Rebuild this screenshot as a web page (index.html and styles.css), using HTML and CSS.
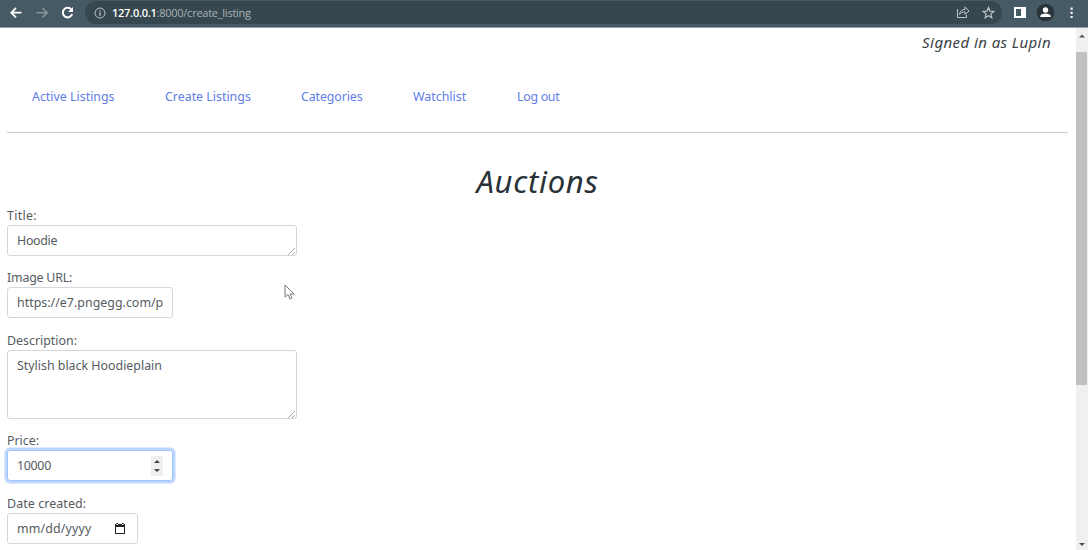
FILE: index.html
```
<!DOCTYPE html>
<html lang="en">
<head>
<meta charset="utf-8">
<title>Auctions</title>
<link rel="stylesheet" href="styles.css">
</head>
<body>
<header class="toolbar">
  <svg class="nav-icons" viewBox="0 0 84 27" fill="none" stroke-width="1.8">
    <path d="M21.500 12.700H11.500M16 8l-4.700 4.700 4.700 4.700" stroke="#fff"/>
    <path d="M36.500 12.700h10.500M42.500 8l4.700 4.700-4.700 4.700" stroke="#89959b" stroke-width="1.500"/>
    <path d="M71.300 9.500a4.800 4.800 0 1 0 .9 4.500" stroke="#fff" stroke-width="2"/>
    <path d="M73 7v5h-5z" fill="#fff"/>
  </svg>
  <div class="address">
    <svg class="info" viewBox="0 0 12 12" fill="none" stroke="#bac2c5" stroke-width="1"><circle cx="6" cy="6" r="5"/><path d="M6 5.300v3.500M6 3.200v1.300" stroke-width="1.300"/></svg>
    <span class="url"><b>127.0.0.1</b>:8000/create_listing</span>
    <svg class="actions" viewBox="0 0 48 24" fill="none" stroke="#bdc5c8" stroke-width="1">
      <path d="M4.500 8v8.500h9V14M6.500 13.500c.5-3.500 2.500-4.900 5.500-5V6l4 4-4 3.500V11c-2.500 0-4 .7-5.500 2.500z"/>
      <path d="M35.500 6.500l1.500 3.600 3.900.3-3 2.500.9 3.800-3.300-2-3.300 2 .9-3.800-3-2.500 3.900-.3z" stroke-width="1.200"/>
    </svg>
  </div>
  <svg class="menu-icons" viewBox="0 0 86 27">
    <path d="M12 7h12v11H12zM14 9v7h5V9z" fill="#fff" fill-rule="evenodd"/>
    <circle cx="43.500" cy="12.500" r="8.700" fill="#27343a"/>
    <circle cx="43.500" cy="10" r="2.700" fill="#fff"/><path d="M38.300 17v-1c0-3.500 10.400-3.500 10.400 0v1z" fill="#fff"/>
    <path d="M68.500 7.500h2.200v2.200h-2.200zM68.500 11.700h2.200v2.200h-2.200zM68.500 15.900h2.200v2.200h-2.200z" fill="#f0f2f3"/>
  </svg>
</header>
<div class="viewport">
  <main class="page">
    <div class="user"><span>Signed in as Lupin</span></div>
    <nav class="links">
      <a class="active">Active Listings</a><a class="create">Create Listings</a><a class="categories">Categories</a><a class="watch">Watchlist</a><a class="logout">Log out</a>
    </nav>
    <h1>Auctions</h1>
    <div class="form">
      <div class="field"><label class="l-title">Title:</label><div class="control wide"><span class="v-title">Hoodie</span><svg class="grip" viewBox="0 0 8 8"><path d="M0 8l7-7M4 8l3-3"/></svg></div></div>
      <div class="field"><label class="l-image">Image URL:</label><div class="control medium"><span class="clip v-url">https://e7.pngegg.com/p</span></div></div>
      <div class="field"><label class="l-desc">Description:</label><div class="control wide tall"><span class="v-desc">Stylish black Hoodieplain</span><svg class="grip" viewBox="0 0 8 8"><path d="M0 8l7-7M4 8l3-3"/></svg></div></div>
      <div class="field"><label class="l-price">Price:</label><div class="control medium focused"><span class="v-price">10000</span><svg class="spinner" viewBox="0 0 12 20"><path d="M0 0h12v20H0z" fill="#efefef"/><path d="M3 7l3-3 3 3zM3 13l3 3 3-3z" fill="#444"/></svg></div></div>
      <div class="field"><label class="l-date">Date created:</label><div class="control date"><span class="v-date">mm/dd/yyyy</span><svg class="calendar" viewBox="0 0 12 13"><path d="M1 2h10v10H1zM2 5v6h8V5zM2.500 1H4v2H2.500zM8 1h1.500v2H8z" fill="#222" fill-rule="evenodd"/></svg></div></div>
    </div>
    <svg class="cursor" viewBox="0 0 12 17"><path d="M1 1v12l3-2.500 2 4.500 2-1-2-4h4z" fill="#fff" stroke="#777"/></svg>
  </main>
  <div class="scrollbar">
    <svg viewBox="0 0 12 24"><path d="M3 10l3-3 3 3z" fill="#505050"/></svg>
    <div class="thumb"></div>
    <svg class="down" viewBox="0 0 12 12"><path d="M3 5l3 3 3-3z" fill="#505050"/></svg>
  </div>
</div>
</body>
</html>
```
FILE: styles.css
```
* { box-sizing: border-box; }
body { margin: 0; height: 550px; overflow: hidden; background: #fff; color: #555b5f; font: 12.4px/19px "Noto Sans", sans-serif; }
svg { display: block; flex: none; }
.toolbar { height: 27px; display: flex; background: #455a64; box-shadow: 0 1px #93a0a5; position: relative; }
.nav-icons { width: 84px; height: 27px; }
.address { width: 917px; height: 23px; margin: 1px 0 0 1px; padding-left: 9px; border-radius: 12px; background: #37474f; display: flex; align-items: center; }
.info { width: 12px; height: 12px; }
.url { margin-left: 6px; font: 11px/22px "Open Sans", sans-serif; color: #a7b1b5; letter-spacing: -.25px; white-space: nowrap; }
.url b { color: #fff; font-weight: 600; }
.actions { width: 48px; height: 24px; margin-left: auto; margin-right: 1px; }
.menu-icons { width: 86px; height: 27px; }
.viewport { display: flex; height: 523px; }
.page { width: 1076px; flex: none; padding: 0 8px 0 7px; position: relative; }
.user { height: 56px; padding: 4px 17px 0 0; text-align: right; font-size: 15px; line-height: 22px; font-style: italic; color: #3b4246; letter-spacing: .42px; }
.links { height: 50px; padding: 4px 0 0 25px; display: flex; border-bottom: 1px solid #cacaca; color: #5f7de8; line-height: 20px; }
.links a { white-space: nowrap; }
.active { width: 133px; }
.create { width: 136px; }
.categories { width: 112px; letter-spacing: -.1px; }
.watch { width: 104px; }
.logout { letter-spacing: -.3px; }
h1 { height: 73px; margin: 0; padding-top: 28px; text-align: center; font-size: 31px; line-height: 40px; font-weight: 400; font-style: italic; color: #293238; letter-spacing: .7px; }
.form { display: flex; flex-direction: column; gap: 12.400px; }
.field { display: flex; flex-direction: column; }
label { height: 19px; }
.l-title { letter-spacing: .3px; }
.l-image { letter-spacing: -.2px; }
.l-date { letter-spacing: .1px; }
label, .control span { white-space: nowrap; }
.control { height: 31px; border: 1px solid #d4d8da; border-radius: 3px; padding: 5px 9px; display: flex; position: relative; }
.wide { width: 290px; }
.medium { width: 166px; }
.tall { height: 69px; }
.date { width: 131px; }
.focused { border-color: #9fc3fb; box-shadow: 0 0 0 2.500px #bdd6ff; }
.clip { width: 146px; overflow: hidden; }
.v-title { letter-spacing: -.3px; }
.v-url { letter-spacing: .02px; }
.v-price { letter-spacing: -.3px; }
.v-date { letter-spacing: .15px; }
.grip { width: 8px; height: 8px; position: absolute; right: 0; bottom: 0; fill: none; stroke: #aaa; }
.spinner { width: 12px; height: 20px; margin-left: auto; }
.calendar { width: 12px; height: 13px; margin: 3px 2px 0 auto; }
.cursor { width: 12px; height: 17px; position: absolute; left: 284px; top: 257px; }
.scrollbar { width: 12px; display: flex; flex-direction: column; background: #f0f0f0; }
.scrollbar svg { width: 12px; height: 25px; }
.thumb { width: 11px; height: 333px; background: #c1c1c1; }
.scrollbar .down { height: 12px; margin-top: auto; }
```
